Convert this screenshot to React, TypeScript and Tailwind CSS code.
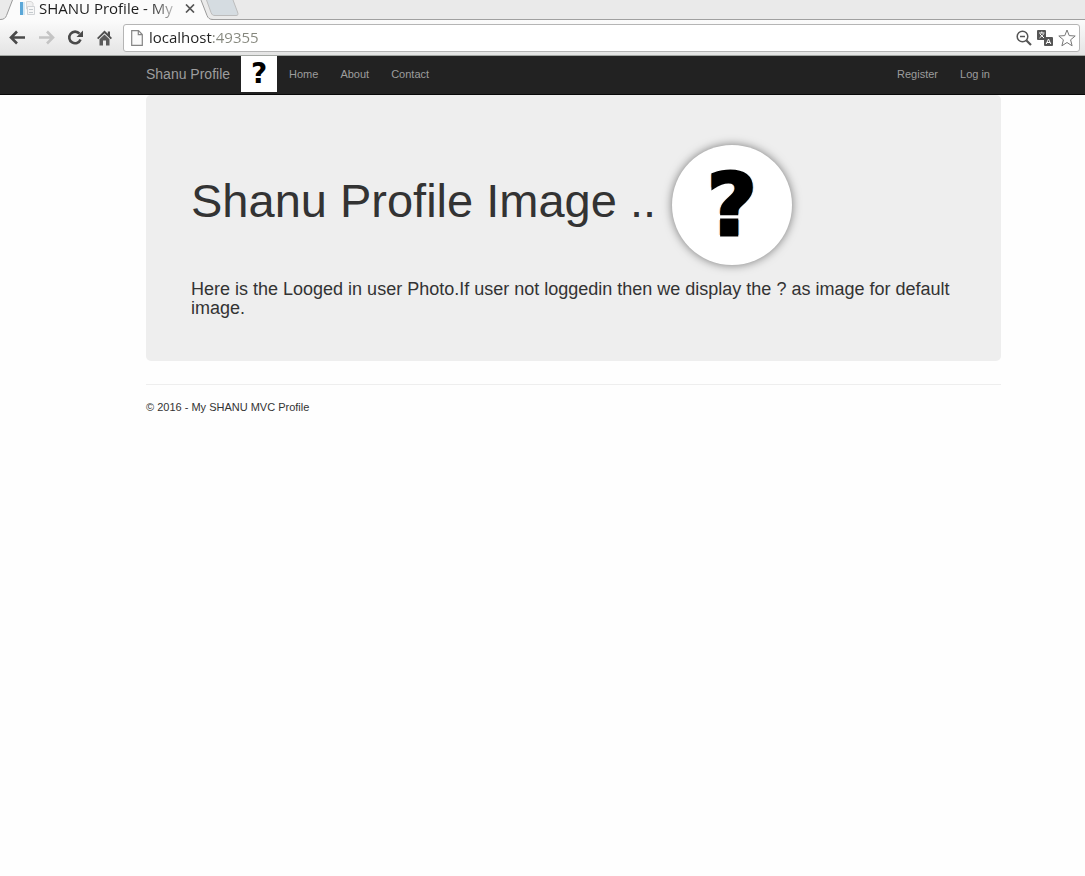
import React, { useState } from "react";

const chromeFont = "font-['Open_Sans','Noto_Sans',sans-serif]";

function Mark({ className }: { className: string }) {
  return (
    <span
      className={`font-['DejaVu_Sans',sans-serif] font-bold leading-none text-black ${className}`}
    >
      ?
    </span>
  );
}

function TabStrip() {
  return (
    <div className="relative flex h-5 items-start border-b border-[#a0a0a0] bg-[#eaeaea]">
      <div className="relative flex h-5 w-[210px] shrink-0 items-start">
        <svg
          className="absolute left-0 top-0"
          width="244"
          height="20"
          viewBox="0 0 244 20"
          fill="none"
          aria-hidden="true"
        >
          <path d="M0 19.5C4 19.5 5.500 18 6.500 15.500L12.500 0H201L207 15.500C208 18 209.500 19.500 213 19.500V20H0Z" fill="#fbfbfb" />
          <path
            d="M0 19.500C4 19.500 5.500 18 6.500 15.500L12.500 0M201 0L207 15.500C208 18 209.500 19.500 213 19.500"
            stroke="#9a9a9a"
          />
          <path
            d="M206.500 0L211 12.500C212 15 213 15.500 215 15.500H236C238 15.500 238.500 14.500 237.500 12L233 0"
            fill="#d5dce1"
            stroke="#bcbcbc"
          />
        </svg>
        <button
          type="button"
          className={`relative ml-5 flex h-4 items-center gap-1 ${chromeFont}`}
        >
          <svg width="15" height="16" viewBox="0 0 15 16" aria-hidden="true">
            <rect x="0" y="2" width="3" height="13" fill="#5aa7d8" />
            <rect x="3" y="2" width="2" height="13" fill="#d4e8f4" />
            <path d="M6.500 1.500H11L13 3V9H6.500Z" fill="#f1f1f1" stroke="#d8d8d8" />
            <path d="M7.500 6.500H14.500V14.500H7.500Z" fill="#f7f7f7" stroke="#d0d3d6" />
            <path d="M9 9.500H13M9 12.500H13" stroke="#c4cace" />
          </svg>
          <span className="w-[138px] whitespace-nowrap bg-linear-to-r from-[#1c1c1c] from-80% to-[#dddddd] bg-clip-text text-left text-[15px] leading-5 text-transparent">
            SHANU Profile - My
          </span>
        </button>
        <button type="button" aria-label="Close tab" className="relative ml-2 mt-1">
          <svg width="10" height="9" viewBox="0 0 10 9" fill="none" aria-hidden="true">
            <path d="M1 0.500L9 8.500M9 0.500L1 8.500" stroke="#555" strokeWidth="1.700" />
          </svg>
        </button>
      </div>
      <button type="button" aria-label="New tab" className="h-4 w-7" />
    </div>
  );
}

function Toolbar() {
  const [url, setUrl] = useState("localhost:49355");
  return (
    <div className="flex h-9 items-center border-b border-[#a3a7a3] bg-linear-to-b from-[#fbfbfb] to-[#e4e4e4] pl-[9px] pr-[5px]">
      <div className="flex shrink-0 items-center gap-3">
        <button type="button" aria-label="Back">
          <svg width="17" height="16" viewBox="0 0 17 16" fill="none" aria-hidden="true">
            <path d="M2 7.500H16M8 1.500L2 7.500L8 13.500" stroke="#4a4a4a" strokeWidth="2.600" />
          </svg>
        </button>
        <button type="button" aria-label="Forward">
          <svg width="17" height="16" viewBox="0 0 17 16" fill="none" aria-hidden="true">
            <path d="M1 7.500H15M9 1.500L15 7.500L9 13.500" stroke="#c4c4c4" strokeWidth="2.600" />
          </svg>
        </button>
        <button type="button" aria-label="Reload">
          <svg width="17" height="16" viewBox="0 0 17 16" fill="none" aria-hidden="true">
            <path d="M13.500 9.500A5.800 5.800 0 1 1 12.500 3.700" stroke="#4a4a4a" strokeWidth="2.600" />
            <path d="M16 0.500V7H9.500Z" fill="#4a4a4a" />
          </svg>
        </button>
        <button type="button" aria-label="Home">
          <svg width="17" height="16" viewBox="0 0 16 16" aria-hidden="true">
            <path d="M8 0.500L0.500 8L1.800 9.200L8 3.200L14.200 9.200L15.500 8L13.500 6V1.500H11.300V3.800Z" fill="#4f4f4f" />
            <path d="M3 9.300L8 4.500L13 9.300V15.500H9.500V10.500H6.500V15.500H3Z" fill="#5a5a5a" />
          </svg>
        </button>
      </div>
      <div className="ml-[10px] flex h-7 min-w-0 flex-1 items-center rounded-[3px] border border-[#b5b5b5] bg-white pl-[7px] pr-[3px]">
        <svg className="shrink-0" width="12" height="16" viewBox="0 0 12 16" fill="none" aria-hidden="true">
          <path d="M0.700 0.700H7.500L11.300 4.500V15.300H0.700ZM7.300 0.700V4.700H11.300" fill="#fafafa" stroke="#858585" strokeWidth="1.200" />
        </svg>
        <input
          type="text"
          aria-label="Address"
          value={url}
          onChange={(e) => setUrl(e.target.value)}
          className={`ml-[6px] h-6 min-w-0 flex-1 bg-[linear-gradient(to_right,#222222_63px,#85877d_63px)] bg-clip-text pb-0.5 text-[15px] leading-5 text-transparent caret-black outline-none ${chromeFont}`}
        />
        <div className="flex shrink-0 items-center gap-[5px]">
          <button type="button" aria-label="Zoom">
            <svg width="16" height="16" viewBox="0 0 16 16" fill="none" aria-hidden="true">
              <circle cx="6.500" cy="6.500" r="5.300" stroke="#555" strokeWidth="1.500" />
              <path d="M4 6.500H9" stroke="#555" strokeWidth="1.500" />
              <path d="M10.500 10.500L15 15" stroke="#555" strokeWidth="2.200" />
            </svg>
          </button>
          <button type="button" aria-label="Translate this page">
            <svg width="16" height="16" viewBox="0 0 16 16" fill="none" aria-hidden="true">
              <rect width="9" height="10" rx="1" fill="#555" />
              <path d="M2 3H7.500M4.800 1.500V3M3 4L7 8M6.800 4L2.500 8" stroke="#fff" />
              <rect x="7" y="7" width="9" height="9" rx="1" fill="#555" />
              <path d="M9.200 14L11.500 9L13.800 14M10 12.500H13" stroke="#fff" />
            </svg>
          </button>
          <button type="button" aria-label="Bookmark this page">
            <svg width="18" height="18" viewBox="0 0 18 18" fill="none" aria-hidden="true">
              <path
                d="M9 1L11.200 6.600L17.200 7L12.600 10.800L14.100 16.800L9 13.500L3.900 16.800L5.400 10.800L0.800 7L6.800 6.600Z"
                fill="#fff"
                stroke="#777"
                strokeLinejoin="round"
              />
            </svg>
          </button>
        </div>
      </div>
    </div>
  );
}

const links = ["Home", "About", "Contact"];
const accountLinks = ["Register", "Log in"];

function NavBar() {
  return (
    <nav className="flex h-[39px] items-start border-b border-[#080808] bg-[#222222] pl-[146px] pr-[95px] text-[11px] leading-9 text-[#9d9d9d]">
      <a href="#" className="text-sm leading-9">
        Shanu Profile
      </a>
      <a
        href="#"
        aria-label="Profile photo"
        className="ml-[11px] flex size-9 items-center justify-center bg-white"
      >
        <Mark className="text-[28px]" />
      </a>
      <div className="ml-3 flex gap-[22px]">
        {links.map((t) => (
          <a key={t} href="#">
            {t}
          </a>
        ))}
      </div>
      <div className="ml-auto flex gap-[22px]">
        {accountLinks.map((t) => (
          <a key={t} href="#">
            {t}
          </a>
        ))}
      </div>
    </nav>
  );
}

export default function App() {
  return (
    <div className="min-h-screen bg-[#fefefe] font-['Liberation_Sans',Arial,sans-serif] text-[#333333]">
      <TabStrip />
      <Toolbar />
      <NavBar />
      <div className="pl-[146px] pr-[84px]">
        <main className="rounded-[5px] bg-[#eeeeee] px-[45px] pb-[43px] pt-[50px]">
          <h1 className="flex items-center gap-4 text-[47px] leading-none">
            <span className="-mt-2.5">Shanu Profile Image ..</span>
            <span className="flex size-[120px] items-center justify-center rounded-full bg-white shadow-[0_0_10px_rgba(0,0,0,0.5)]">
              <Mark className="text-[86px] [-webkit-text-stroke:3px_black] [text-shadow:-2px_0_1px_#e88a2c,2px_0_1px_#3c9be8]" />
            </span>
          </h1>
          <h3 className="mt-[15px] text-lg leading-[19px]">
            Here is the Looged in user Photo.If user not loggedin then we display the ? as image for
            default image.
          </h3>
        </main>
        <hr className="mt-[23px] border-[#eeeeee]" />
        <footer className="mt-[15px] text-[11px] leading-[14px]">
          <p>© 2016 - My SHANU MVC Profile</p>
        </footer>
      </div>
    </div>
  );
}
